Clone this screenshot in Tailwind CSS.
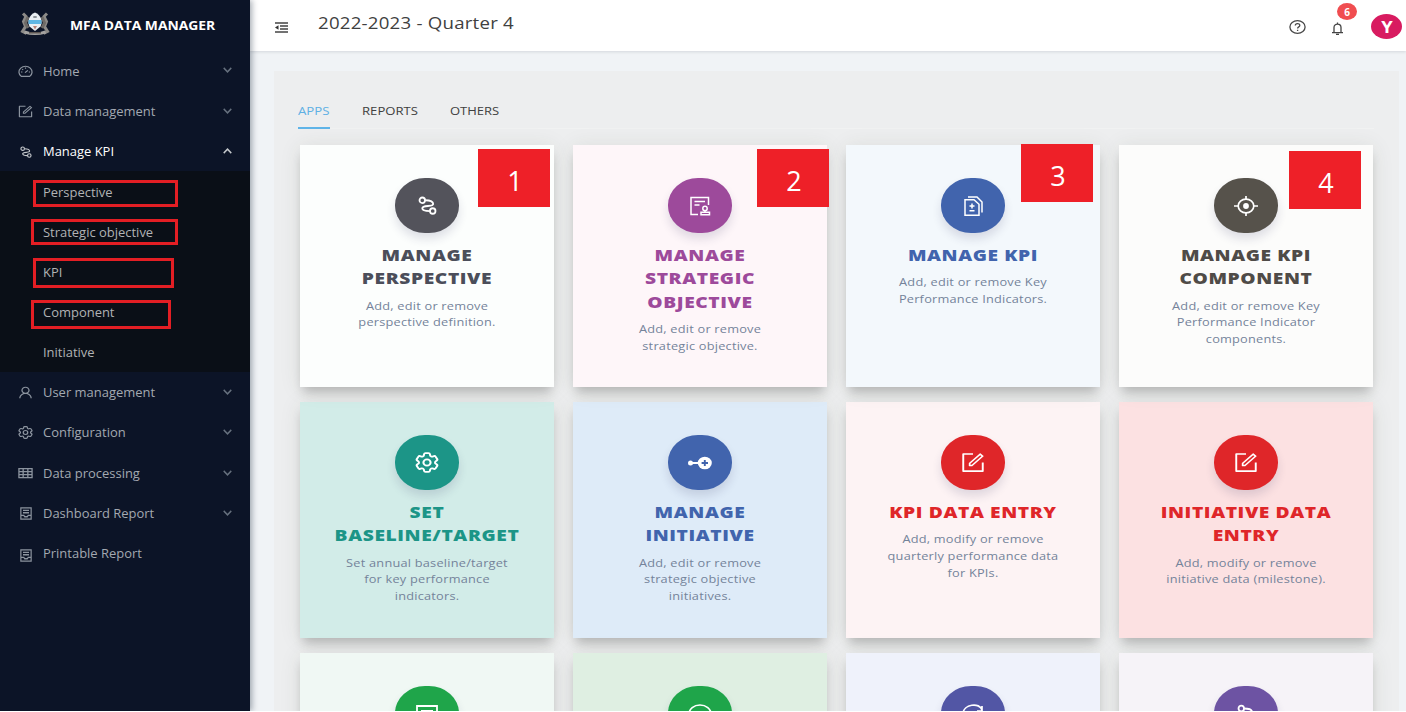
<!DOCTYPE html>
<html lang="en">
<head>
<meta charset="utf-8">
<title>MFA Data Manager</title>
<script src="https://cdn.jsdelivr.net/npm/@tailwindcss/browser@4"></script>
</head>
<body class="w-[1406px] h-[712px] overflow-hidden bg-white font-['Open_Sans','Noto_Sans',sans-serif]">
<svg class="hidden">
  <symbol id="form" viewBox="64 64 896 896" preserveAspectRatio="none"><path fill="currentColor" d="M904 512h-56c-4.400 0-8 3.600-8 8v320H184V184h320c4.400 0 8-3.600 8-8v-56c0-4.400-3.600-8-8-8H144c-17.700 0-32 14.300-32 32v736c0 17.700 14.300 32 32 32h736c17.700 0 32-14.300 32-32V520c0-4.400-3.600-8-8-8z"/><path fill="currentColor" d="M355.900 534.900L354 653.800c-.1 8.900 7.100 16.200 16 16.200h.4l118-2.900c2-.1 4-.9 5.400-2.300l415.900-415c3.100-3.100 3.100-8.200 0-11.300L785.400 114.300c-1.600-1.600-3.600-2.300-5.700-2.300s-4.100.8-5.700 2.300l-415.800 415a8.300 8.300 0 00-2.300 5.600zm63.500 23.600L779.700 199l45.200 45.100-360.500 359.700-45.700 1.100.7-46.400z"/></symbol>
  <symbol id="user" viewBox="64 64 896 896" preserveAspectRatio="none"><path fill="currentColor" d="M858.500 763.600a374 374 0 00-80.600-119.500 375.630 375.630 0 00-119.500-80.600c-.4-.2-.8-.3-1.200-.5C719.500 518 760 444.700 760 362c0-137-111-248-248-248S264 225 264 362c0 82.700 40.500 156 102.800 201.100-.4.2-.8.3-1.200.5-44.800 18.900-85 46-119.500 80.600a375.630 375.630 0 00-80.600 119.500A371.700 371.700 0 00136 901.800a8 8 0 008 8.200h60c4.400 0 7.900-3.500 8-7.800 2-77.200 33-149.500 87.800-204.300 56.700-56.700 132-87.900 212.200-87.900s155.500 31.200 212.200 87.900C779 752.700 810 825 812 902.200c.1 4.400 3.600 7.800 8 7.800h60a8 8 0 008-8.200c-1-47.800-10.900-94.300-29.500-138.200zM512 534c-45.900 0-89.100-17.900-121.600-50.400S340 407.900 340 362c0-45.900 17.900-89.100 50.400-121.600S466.100 190 512 190s89.100 17.900 121.600 50.400S684 316.100 684 362c0 45.900-17.900 89.100-50.400 121.600S557.900 534 512 534z"/></symbol>
  <symbol id="gear" viewBox="2 2 20 20" preserveAspectRatio="none"><g fill="none" stroke="currentColor" stroke-width="1.700"><path d="M9.594 3.940c.09-.542.56-.94 1.110-.94h2.593c.55 0 1.020.398 1.110.94l.213 1.281c.063.374.313.686.645.870.074.04.147.083.22.127.325.196.72.257 1.075.124l1.217-.456a1.125 1.125 0 0 1 1.370.490l1.296 2.247a1.125 1.125 0 0 1-.26 1.431l-1.003.827c-.293.241-.438.613-.43.992a7.723 7.723 0 0 1 0 .255c-.008.378.137.75.43.991l1.004.827c.424.35.534.955.26 1.430l-1.298 2.247a1.125 1.125 0 0 1-1.369.491l-1.217-.456c-.355-.133-.75-.072-1.076.124a6.470 6.470 0 0 1-.22.128c-.331.183-.581.495-.644.869l-.213 1.281c-.09.543-.56.94-1.110.94h-2.594c-.55 0-1.019-.398-1.110-.94l-.213-1.281c-.062-.374-.312-.686-.644-.870a6.520 6.520 0 0 1-.22-.127c-.325-.196-.72-.257-1.076-.124l-1.217.456a1.125 1.125 0 0 1-1.369-.490l-1.297-2.247a1.125 1.125 0 0 1 .26-1.431l1.004-.827c.292-.24.437-.613.43-.991a6.932 6.932 0 0 1 0-.255c.007-.38-.138-.751-.43-.992l-1.004-.827a1.125 1.125 0 0 1-.26-1.430l1.297-2.247a1.125 1.125 0 0 1 1.370-.491l1.216.456c.356.133.751.072 1.076-.124.072-.044.146-.086.22-.128.332-.183.582-.495.644-.869l.214-1.280Z"/><circle cx="12" cy="12" r="3"/></g></symbol>
  <symbol id="route" viewBox="0 0 20 20" preserveAspectRatio="none"><g fill="none" stroke="currentColor" stroke-width="1.900"><circle cx="4.500" cy="4.500" r="2.900"/><circle cx="15.500" cy="15.800" r="2.900"/><path d="M7.500 4.500c5 0 8.500 1.500 8.500 4 0 3.500-11.500.5-11.500 4.500 0 2.500 4 3 8 3"/></g></symbol>
  <symbol id="dash" viewBox="0 0 16 16" preserveAspectRatio="none"><g fill="none" stroke="currentColor" stroke-width="1.300"><path d="M3.500 14a7 7 0 1 1 9 0z"/><path d="M7.500 9.500l3-3M8 3v1.500M3.200 8.500h1.500M11.500 8.500h1.300M4.500 5l1 1"/></g></symbol>
  <symbol id="grid" viewBox="0 0 16 14" preserveAspectRatio="none"><path fill="none" stroke="currentColor" stroke-width="1.400" d="M1 2h14v10.500H1zM1 5.500h14M1 9h14M5.500 2v10.500M10.500 2v10.500"/></symbol>
  <symbol id="report" viewBox="0 0 14 14" preserveAspectRatio="none"><path fill="none" stroke="currentColor" stroke-width="1.400" d="M1 1h12v12H1zM1 9h3.500l1 1.500h3l1-1.500H13M3.500 3.700h7M3.500 6.200h7"/></symbol>
  <symbol id="down" viewBox="0 0 10 6" preserveAspectRatio="none"><path fill="none" stroke="currentColor" stroke-width="1.600" d="M.8.800L5 4.800 9.200.800"/></symbol>
</svg>

<div class="flex h-[711px] overflow-hidden">
  <aside class="relative z-10 h-full w-[250px] shrink-0 bg-[#0c1427] text-[#a3a9b1] shadow-[2px_0_6px_rgba(0,21,41,0.35)]">
    <div class="flex h-[51px] items-center">
      <svg class="ml-[20px] mt-[-3px] h-[24px] w-[30px]" viewBox="0 0 30 24" preserveAspectRatio="none">
        <g fill="none" stroke="#8d8b88" stroke-width="3"><path d="M3 1.500l3 3-2.500 5 2 5-3 5 4 2M27 1.500l-3 3 2.500 5-2 5 3 5-4 2"/><path stroke="#6e6a66" d="M8 5L5.500 11l2.500 5M22 5l2.500 6-2.500 5"/></g>
        <path fill="#a5a3a1" d="M5 18.500q10 4 20 0l1 3q-11 3-22 0z"/><path fill="#5b5450" d="M9 20h12v1.500H9z"/>
        <path fill="#e9eef2" d="M15 .5c6 2.500 8 9 5.500 14L15 19l-5.500-4.500C7 9.500 9 3 15 .5z"/><path fill="#5fb6e3" d="M8.500 8h13v4h-13z"/><path fill="#b98579" d="M13 14h4l-2 3.500z"/><path fill="#8c9298" d="M13.300 4h3.400v2h-3.400z"/>
      </svg>
      <span class="ml-[20px] mt-[1px] origin-left scale-x-[1.155] whitespace-nowrap text-[12px] font-bold text-white">MFA DATA MANAGER</span>
    </div>
    <nav class="text-[12px] font-medium leading-[40px] [&_span]:mt-[1px] [&_span]:block [&_span]:w-[165px] [&_span]:origin-left [&_span]:scale-x-[1.080] [&_span]:whitespace-nowrap">
      <div class="flex h-[40px] items-center"><svg class="ml-[18px] mr-[10px] h-[13px] w-[15px] text-[#8b939e]"><use href="#dash"/></svg><span>Home</span><svg class="ml-[15px] mt-[-2px] h-[6px] w-[9px] text-[#66707e]"><use href="#down"/></svg></div>
      <div class="flex h-[40px] items-center"><svg class="ml-[18px] mr-[10px] h-[13px] w-[15px] text-[#8b939e]"><use href="#form"/></svg><span>Data management</span><svg class="ml-[15px] h-[6px] w-[9px] text-[#66707e]"><use href="#down"/></svg></div>
      <div class="flex h-[40px] items-center text-white"><svg class="ml-[20px] mr-[11px] mt-[1px] h-[12px] w-[12px] text-[#c5c8cc]"><use href="#route"/></svg><span>Manage KPI</span><svg class="ml-[15px] h-[6px] w-[9px] rotate-180 text-[#c5c8cc]"><use href="#down"/></svg></div>
      <div class="h-[201px] bg-[#0a0f17] pl-[43px] text-[#b1b3b5]">
        <div class="relative h-[40px] pt-[1px]"><span>Perspective</span><i class="absolute left-[-10px] top-[9px] h-[27px] w-[145px] border-[3px] border-[#e31e24]"></i></div>
        <div class="relative h-[40px] pt-[1px]"><span>Strategic objective</span><i class="absolute left-[-12px] top-[8px] h-[26px] w-[147px] border-[3px] border-[#e31e24]"></i></div>
        <div class="relative h-[40px] pt-[1px]"><span>KPI</span><i class="absolute left-[-10px] top-[7px] h-[30px] w-[141px] border-[3px] border-[#e31e24]"></i></div>
        <div class="relative h-[40px] pt-[1px]"><span>Component</span><i class="absolute left-[-12px] top-[9px] h-[29px] w-[140px] border-[3px] border-[#e31e24]"></i></div>
        <div class="h-[40px] pt-[1px]"><span>Initiative</span></div>
      </div>
      <div class="flex h-[40px] items-center"><svg class="ml-[18px] mr-[10px] mt-[1px] h-[13px] w-[15px] text-[#8b939e]"><use href="#user"/></svg><span>User management</span><svg class="ml-[15px] mt-[-1px] h-[6px] w-[9px] text-[#66707e]"><use href="#down"/></svg></div>
      <div class="flex h-[41px] items-center"><svg class="ml-[18px] mr-[10px] h-[13px] w-[15px] text-[#8b939e]"><use href="#gear"/></svg><span>Configuration</span><svg class="ml-[15px] mt-[-1px] h-[6px] w-[9px] text-[#66707e]"><use href="#down"/></svg></div>
      <div class="flex h-[40px] items-center"><svg class="ml-[18px] mr-[10px] h-[12px] w-[15px] text-[#8b939e]"><use href="#grid"/></svg><span>Data processing</span><svg class="ml-[15px] mt-[-1px] h-[6px] w-[9px] text-[#66707e]"><use href="#down"/></svg></div>
      <div class="flex h-[40px] items-center"><svg class="ml-[20px] mr-[11px] h-[13px] w-[12px] text-[#8b939e]"><use href="#report"/></svg><span>Dashboard Report</span><svg class="ml-[15px] mt-[-1px] h-[6px] w-[9px] text-[#66707e]"><use href="#down"/></svg></div>
      <div class="flex h-[40px] items-center"><svg class="ml-[20px] mr-[11px] mt-[5px] h-[13px] w-[12px] text-[#8b939e]"><use href="#report"/></svg><span>Printable Report</span></div>
    </nav>
  </aside>

  <div class="flex min-w-0 flex-1 flex-col bg-[#f0f3f6]">
    <header class="relative z-[5] flex h-[51px] shrink-0 bg-white shadow-[0_1px_3px_rgba(0,21,41,0.12)]">
      <svg class="ml-[25px] mt-[22px] h-[11px] w-[13px]" viewBox="0 0 13 11"><path stroke="#444" stroke-width="1.300" d="M0 1h13M5 4h8M5 7h8M0 10h13"/><path fill="#333" d="M0 5.500L3.500 3.300v4.400z"/></svg>
      <h1 class="ml-[30px] mt-[11px] w-[180px] origin-left scale-x-[1.165] whitespace-nowrap text-[16px] leading-[24px] tracking-[0.2px] text-[#404040]">2022-2023 - Quarter 4</h1>
      <svg class="ml-auto mt-[20px] h-[14px] w-[17px]" viewBox="0 0 17 14" preserveAspectRatio="none"><g fill="none" stroke="#484848" stroke-width="1.300"><ellipse cx="8.500" cy="7" rx="7.600" ry="6.300"/><path d="M6.300 5.600c0-2.600 4.500-2.600 4.500-.2 0 1.500-2.200 1.400-2.200 3.100M8.600 9.800v1.200"/></g></svg>
      <div class="relative ml-[26px] mt-[22px] h-[13px] w-[11px]">
        <svg class="h-[13px] w-[11px]" viewBox="0 0 11 13"><path fill="none" stroke="#444" stroke-width="1.300" d="M0 10.600h11M2 10.500V5.500c0-4.600 7-4.600 7 0v5M5.500 2V.500M4 12.400h3"/></svg>
        <b class="absolute left-[5px] top-[-19px] flex h-[17px] w-[20px] items-center justify-center rounded-[50%] bg-[#f04d50] pt-px text-[10px] font-bold text-white">6</b>
      </div>
      <div class="ml-[28px] mr-[4px] mt-[14px] flex h-[25px] w-[31px] items-center justify-center rounded-[50%] bg-[#d81b60]"><span class="scale-x-[1.150] text-[16px] font-bold text-white">Y</span></div>
    </header>

    <main class="ml-[24px] mr-[7px] mt-[20px] min-h-0 flex-1 overflow-hidden bg-[#edeeef] pl-[26px] pr-[25px]">
      <div class="ml-[-2px] flex h-[58px] border-b border-[#f1f2f2] text-[11.500px] leading-[18px] text-[#404040]">
        <div class="mr-[32px] h-[58px] w-[32px] border-b-2 border-[#5fb4e8] pt-[31px] text-[#5fb0e4]"><span class="block origin-left scale-x-[1.150] whitespace-nowrap">APPS</span></div>
        <div class="mr-[32px] w-[56px] pt-[31px]"><span class="block origin-left scale-x-[1.140] whitespace-nowrap">REPORTS</span></div>
        <div class="pt-[31px]"><span class="block origin-left scale-x-[1.130] whitespace-nowrap">OTHERS</span></div>
      </div>
      <section class="mt-[16px] grid grid-cols-[254px_254px_254px_254px] grid-rows-[242px_236px_236px] gap-x-[19px] gap-y-[15px] text-center text-[11.500px] leading-[16.700px] tracking-[0.200px] text-[#74839a] [&_h2]:mb-[7px] [&_h2]:mt-[11px] [&_h2]:scale-x-[1.200] [&_h2]:text-[16px] [&_h2]:font-extrabold [&_h2]:leading-[23.300px] [&_h2]:tracking-[0.500px] [&>div]:pt-[33px] [&>div]:shadow-[0_8px_10px_-3px_rgba(0,0,0,0.20),0_2px_20px_rgba(60,70,40,0.10)] [&_p]:scale-x-[1.110] [&_.disc]:mx-auto [&_.disc]:flex [&_.disc]:h-[55px] [&_.disc]:w-[64px] [&_.disc]:items-center [&_.disc]:justify-center [&_.disc]:rounded-[30px_/_27px] [&_.disc]:text-white [&_.disc]:shadow-[0_6px_10px_rgba(40,40,90,0.14)] [&_.tag]:absolute [&_.tag]:flex [&_.tag]:h-[58px] [&_.tag]:w-[72px] [&_.tag]:items-center [&_.tag]:justify-center [&_.tag]:bg-[#ee2028] [&_.tag]:pt-[7px] [&_.tag]:pl-[2px] [&_.tag]:text-[27px] [&_.tag]:not-italic [&_.tag]:text-white">
        <div class="relative bg-[#fcfefd]"><div class="disc bg-[#53535b]"><svg class="h-[19px] w-[19px]"><use href="#route"/></svg></div><h2 class="text-[#4b4e5a]">MANAGE<br>PERSPECTIVE</h2><p>Add, edit or remove<br>perspective definition.</p><i class="tag left-[178px] top-[4px]">1</i></div>
        <div class="relative bg-[#fef6f9]"><div class="disc bg-[#9d4a9b]"><svg class="h-[20px] w-[21px]" viewBox="0 0 21 20"><g fill="none" stroke="currentColor" stroke-width="1.500"><path d="M8 18.500H1v-17h17.500V9M4.500 5.500h10.500M4.500 9h5"/><circle cx="15" cy="12.500" r="2.200"/><path d="M11 16.300h8.500v2.500H11zM15 14.500v2"/></g></svg></div><h2 class="text-[#9d4a9b]">MANAGE<br>STRATEGIC<br>OBJECTIVE</h2><p>Add, edit or remove<br>strategic objective.</p><i class="tag left-[184px] top-[4px]">2</i></div>
        <div class="relative bg-[#f3f8fc]"><div class="disc bg-[#4164ad]"><svg class="h-[20px] w-[19px]" viewBox="0 0 19 20"><path fill="none" stroke="currentColor" stroke-width="1.500" d="M1 3.800h9l5 4.500v10.900H1zM4 1h9l5 5v10.500M8 7.500v5M5.500 10h5M5.500 14.800h5"/></svg></div><h2 class="text-[#4164ad]">MANAGE KPI</h2><p>Add, edit or remove Key<br>Performance Indicators.</p><i class="tag left-[175px] top-[-1px]">3</i></div>
        <div class="relative bg-[#fcfcfb]"><div class="disc bg-[#56524b]"><svg class="h-[20px] w-[24px]" viewBox="0 0 24 20"><g fill="none" stroke="currentColor" stroke-width="1.700"><ellipse cx="12" cy="10" rx="7.800" ry="6.800"/><path d="M12 0v4M12 16v4M0 10h5M19 10h5"/></g><circle cx="12" cy="10" r="2.900" fill="currentColor"/></svg></div><h2 class="text-[#4f4b47]">MANAGE KPI<br>COMPONENT</h2><p>Add, edit or remove Key<br>Performance Indicator<br>components.</p><i class="tag left-[170px] top-[6px]">4</i></div>

        <div class="bg-[#d2ece8]"><div class="disc bg-[#1c9587]"><svg class="h-[21px] w-[24px]"><use href="#gear"/></svg></div><h2 class="text-[#1c9587]">SET<br>BASELINE/TARGET</h2><p>Set annual baseline/target<br>for key performance<br>indicators.</p></div>
        <div class="bg-[#deebf8]"><div class="disc bg-[#4164ad]"><svg class="h-[14px] w-[24px]" viewBox="0 0 24 14"><g fill="currentColor"><circle cx="2.500" cy="7" r="2.500"/><path d="M2 6h9v2H2z"/><ellipse cx="16.800" cy="7" rx="7" ry="6.300"/></g><path stroke="#4164ad" stroke-width="1.900" d="M13.600 7h6.400M16.800 4v6"/></svg></div><h2 class="text-[#4164ad]">MANAGE<br>INITIATIVE</h2><p>Add, edit or remove<br>strategic objective<br>initiatives.</p></div>
        <div class="bg-[#fdf3f4]"><div class="disc bg-[#df2629]"><svg class="h-[21px] w-[24px]"><use href="#form"/></svg></div><h2 class="text-[#df2629]">KPI DATA ENTRY</h2><p>Add, modify or remove<br>quarterly performance data<br>for KPIs.</p></div>
        <div class="bg-[#fce1e2]"><div class="disc bg-[#df2629]"><svg class="h-[21px] w-[24px]"><use href="#form"/></svg></div><h2 class="text-[#df2629]">INITIATIVE DATA<br>ENTRY</h2><p>Add, modify or remove<br>initiative data (milestone).</p></div>

        <div class="bg-[#f0f8f4]"><div class="disc bg-[#1fa54a]"><svg class="h-[18px] w-[22px]" viewBox="0 0 22 18"><path fill="none" stroke="currentColor" stroke-width="1.800" d="M1 1h20v15H1zM5 6h12"/></svg></div></div>
        <div class="bg-[#dfefe2]"><div class="disc bg-[#1fa54a]"><svg class="h-[20px] w-[24px]" viewBox="0 0 24 20"><ellipse cx="12" cy="10" rx="11" ry="9" fill="none" stroke="currentColor" stroke-width="1.700"/></svg></div></div>
        <div class="bg-[#eff2fb]"><div class="disc bg-[#5256a5]"><svg class="h-[20px] w-[24px]" viewBox="0 0 24 20"><path fill="none" stroke="currentColor" stroke-width="1.700" d="M2 10C2 0 19 -2 21 6M21 2v5h-5"/></svg></div></div>
        <div class="bg-[#f6f3f8]"><div class="disc bg-[#6d53a3]"><svg class="h-[20px] w-[19px]"><use href="#route"/></svg></div></div>
      </section>
    </main>
  </div>
</div>
</body>
</html>
